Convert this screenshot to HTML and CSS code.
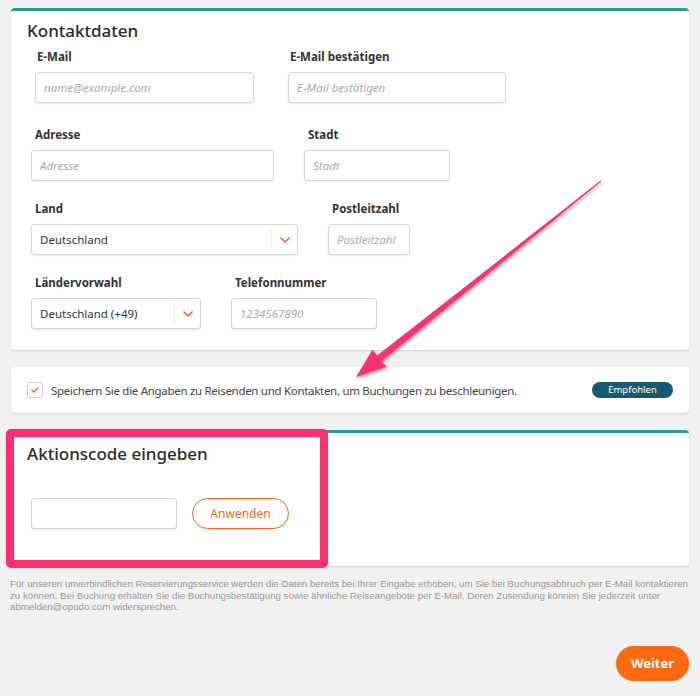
FILE: index.html
```html
<!DOCTYPE html>
<html lang="de">
<head>
<meta charset="utf-8">
<link rel="stylesheet" href="styles.css">
</head>
<body>
<div class="page">
  <section class="card card-contact">
    <h2 class="card-title">Kontaktdaten</h2>
    <div class="row row-first">
      <div class="field f-email"><label class="lbl lbl-tight">E-Mail</label><input class="inp" placeholder="name@example.com"></div>
      <div class="field f-email2"><label class="lbl lbl-tight">E-Mail bestätigen</label><input class="inp" placeholder="E-Mail bestätigen"></div>
    </div>
    <div class="row row-second">
      <div class="field f-addr"><label class="lbl">Adresse</label><input class="inp" placeholder="Adresse"></div>
      <div class="field f-city"><label class="lbl">Stadt</label><input class="inp" placeholder="Stadt"></div>
    </div>
    <div class="row">
      <div class="field f-land"><label class="lbl">Land</label>
        <div class="sel"><span class="sel-text">Deutschland</span><span class="sel-btn"><svg width="10" height="6" viewBox="0 0 10 6"><path d="M1 1 L5 5 L9 1" fill="none" stroke="#f0691f" stroke-width="1.6" stroke-linecap="round" stroke-linejoin="round"/></svg></span></div>
      </div>
      <div class="field f-plz"><label class="lbl">Postleitzahl</label><input class="inp" placeholder="Postleitzahl"></div>
    </div>
    <div class="row">
      <div class="field f-vorwahl"><label class="lbl">Ländervorwahl</label>
        <div class="sel"><span class="sel-text">Deutschland (+49)</span><span class="sel-btn"><svg width="10" height="6" viewBox="0 0 10 6"><path d="M1 1 L5 5 L9 1" fill="none" stroke="#f0691f" stroke-width="1.6" stroke-linecap="round" stroke-linejoin="round"/></svg></span></div>
      </div>
      <div class="field f-tel"><label class="lbl">Telefonnummer</label><input class="inp" placeholder="1234567890"></div>
    </div>
  </section>

  <section class="card card-save">
    <span class="check"><svg width="8" height="6" viewBox="0 0 8 6"><path d="M1 3.2 L3 5 L7 1" fill="none" stroke="#f0691f" stroke-width="1.5" stroke-linecap="round" stroke-linejoin="round"/></svg></span>
    <span class="save-text">Speichern Sie die Angaben zu Reisenden und Kontakten, um Buchungen zu beschleunigen.</span>
    <span class="badge">Empfohlen</span>
  </section>

  <section class="card card-promo">
    <h2 class="card-title">Aktionscode eingeben</h2>
    <div class="promo-row">
      <input class="inp promo-inp">
      <button class="btn-outline">Anwenden</button>
    </div>
  </section>

  <p class="legal">Für unseren unverbindlichen Reservierungsservice werden die Daten bereits bei Ihrer Eingabe erhoben, um Sie bei Buchungsabbruch per E-Mail kontaktieren<br>zu können. Bei Buchung erhalten Sie die Buchungsbestätigung sowie ähnliche Reiseangebote per E-Mail. Deren Zusendung können Sie jederzeit unter<br>abmelden@opodo.com widersprechen.</p>

  <div class="actions"><button class="btn-primary">Weiter</button></div>

  <div class="highlight"></div>
  <svg class="annot-arrow" width="700" height="696" viewBox="0 0 700 696">
    <polygon points="600.7,180.6 377.2,355.5 372.5,349.7 356,377 386.3,366.8 381.6,361 601.3,181.4" fill="#fb3172"/>
  </svg>
</div>
</body>
</html>
```
FILE: styles.css
```css
* { box-sizing: border-box; }
html, body { margin: 0; padding: 0; }
body {
  background: #f1f1f1;
  font-family: "Noto Sans", "Open Sans", sans-serif;
  color: #333;
  width: 700px;
  height: 696px;
  overflow: hidden;
}
.page {
  position: relative;
  padding: 8px 11px 0 11px;
  height: 696px;
}
.card {
  background: #fff;
  border-radius: 4px;
  box-shadow: 0 1px 2px rgba(0,0,0,0.12);
}
.card-contact {
  border-top: 3px solid #2f9a98;
  padding: 8px 0 21px 0;
}
.card-title {
  margin: 0 0 6px 16px;
  font-size: 17px;
  line-height: 24px;
  font-weight: 500;
  color: #2b2b2b;
}
.row {
  display: flex;
  gap: 30px;
  padding-left: 20px;
  margin-top: 20px;
}
.row-first { padding-left: 24px; gap: 34px; margin-top: 0; }
.row-second { margin-top: 24px; }
.field { display: flex; flex-direction: column; }
.lbl {
  display: block;
  font-size: 11.5px;
  font-weight: 700;
  line-height: 16px;
  margin: 0 0 7px 0;
  padding-left: 4px;
  color: #333;
}
.lbl-tight { padding-left: 2px; }
.inp {
  height: 31px;
  width: 100%;
  border: 1px solid #d6d6d6;
  border-radius: 3px;
  box-shadow: 0 1px 2px rgba(0,0,0,0.08);
  padding: 0 8px;
  font-family: inherit;
  font-size: 11.5px;
  color: #333;
  outline: none;
  background: #fff;
}
.inp::placeholder { color: #aaa; font-style: italic; }
.f-email { width: 219px; }
.f-email2 { width: 218px; }
.f-addr { width: 243px; }
.f-city { width: 146px; }
.f-land { width: 267px; }
.f-plz { width: 82px; }
.f-vorwahl { width: 170px; }
.f-tel { width: 146px; }
.sel {
  height: 31px;
  display: flex;
  align-items: center;
  border: 1px solid #d6d6d6;
  border-radius: 3px;
  box-shadow: 0 1px 2px rgba(0,0,0,0.08);
}
.sel-text {
  flex: 1;
  padding-left: 8px;
  font-size: 11.5px;
  color: #333;
}
.sel-btn {
  width: 26px;
  height: 23px;
  border-left: 1px solid #ececec;
  display: flex;
  align-items: center;
  justify-content: center;
}
.card-save {
  margin-top: 17px;
  height: 46px;
  display: flex;
  align-items: center;
  padding: 0 16px;
}
.check {
  width: 16px;
  height: 16px;
  border: 1px solid #cfcfcf;
  border-radius: 2px;
  display: flex;
  align-items: center;
  justify-content: center;
}
.save-text {
  margin-left: 8px;
  font-size: 11.5px;
  letter-spacing: -0.3px;
  color: #444;
}
.badge {
  margin-left: auto;
  width: 81px;
  height: 16px;
  border-radius: 8px;
  background: #175a70;
  color: #fff;
  font-size: 9.5px;
  line-height: 16px;
  text-align: center;
}
.card-promo {
  margin-top: 17px;
  border-top: 3px solid #2f9a98;
  padding: 9px 0 37px 0;
}
.card-promo .card-title { margin-bottom: 32px; }
.promo-row {
  display: flex;
  gap: 15px;
  padding-left: 20px;
}
.promo-inp { width: 146px; }
.btn-outline {
  width: 97px;
  height: 31px;
  border: 1px solid #f0691f;
  border-radius: 16px;
  background: #fff;
  color: #f0691f;
  font-family: inherit;
  font-size: 12px;
  padding: 0;
}
.legal {
  margin: 12px 0 0 -1px;
  font-family: "Liberation Sans", sans-serif;
  font-size: 9.7px;
  line-height: 11.5px;
  color: #9a9a9a;
  white-space: nowrap;
}
.actions {
  display: flex;
  justify-content: flex-end;
  margin-top: 33px;
}
.btn-primary {
  width: 73px;
  height: 35px;
  border: none;
  border-radius: 18px;
  background: #ff6a10;
  color: #fff;
  font-family: inherit;
  font-weight: 700;
  font-size: 13px;
  padding: 0;
}
.highlight {
  position: absolute;
  left: 6px;
  top: 429px;
  width: 322px;
  height: 139px;
  border: 8px solid #fd2f6e;
  border-radius: 5px;
  background: transparent;
  pointer-events: none;
}
.annot-arrow {
  position: absolute;
  left: 0;
  top: 0;
  pointer-events: none;
  filter: drop-shadow(1px 2px 1.5px rgba(0,0,0,0.35));
}
```
